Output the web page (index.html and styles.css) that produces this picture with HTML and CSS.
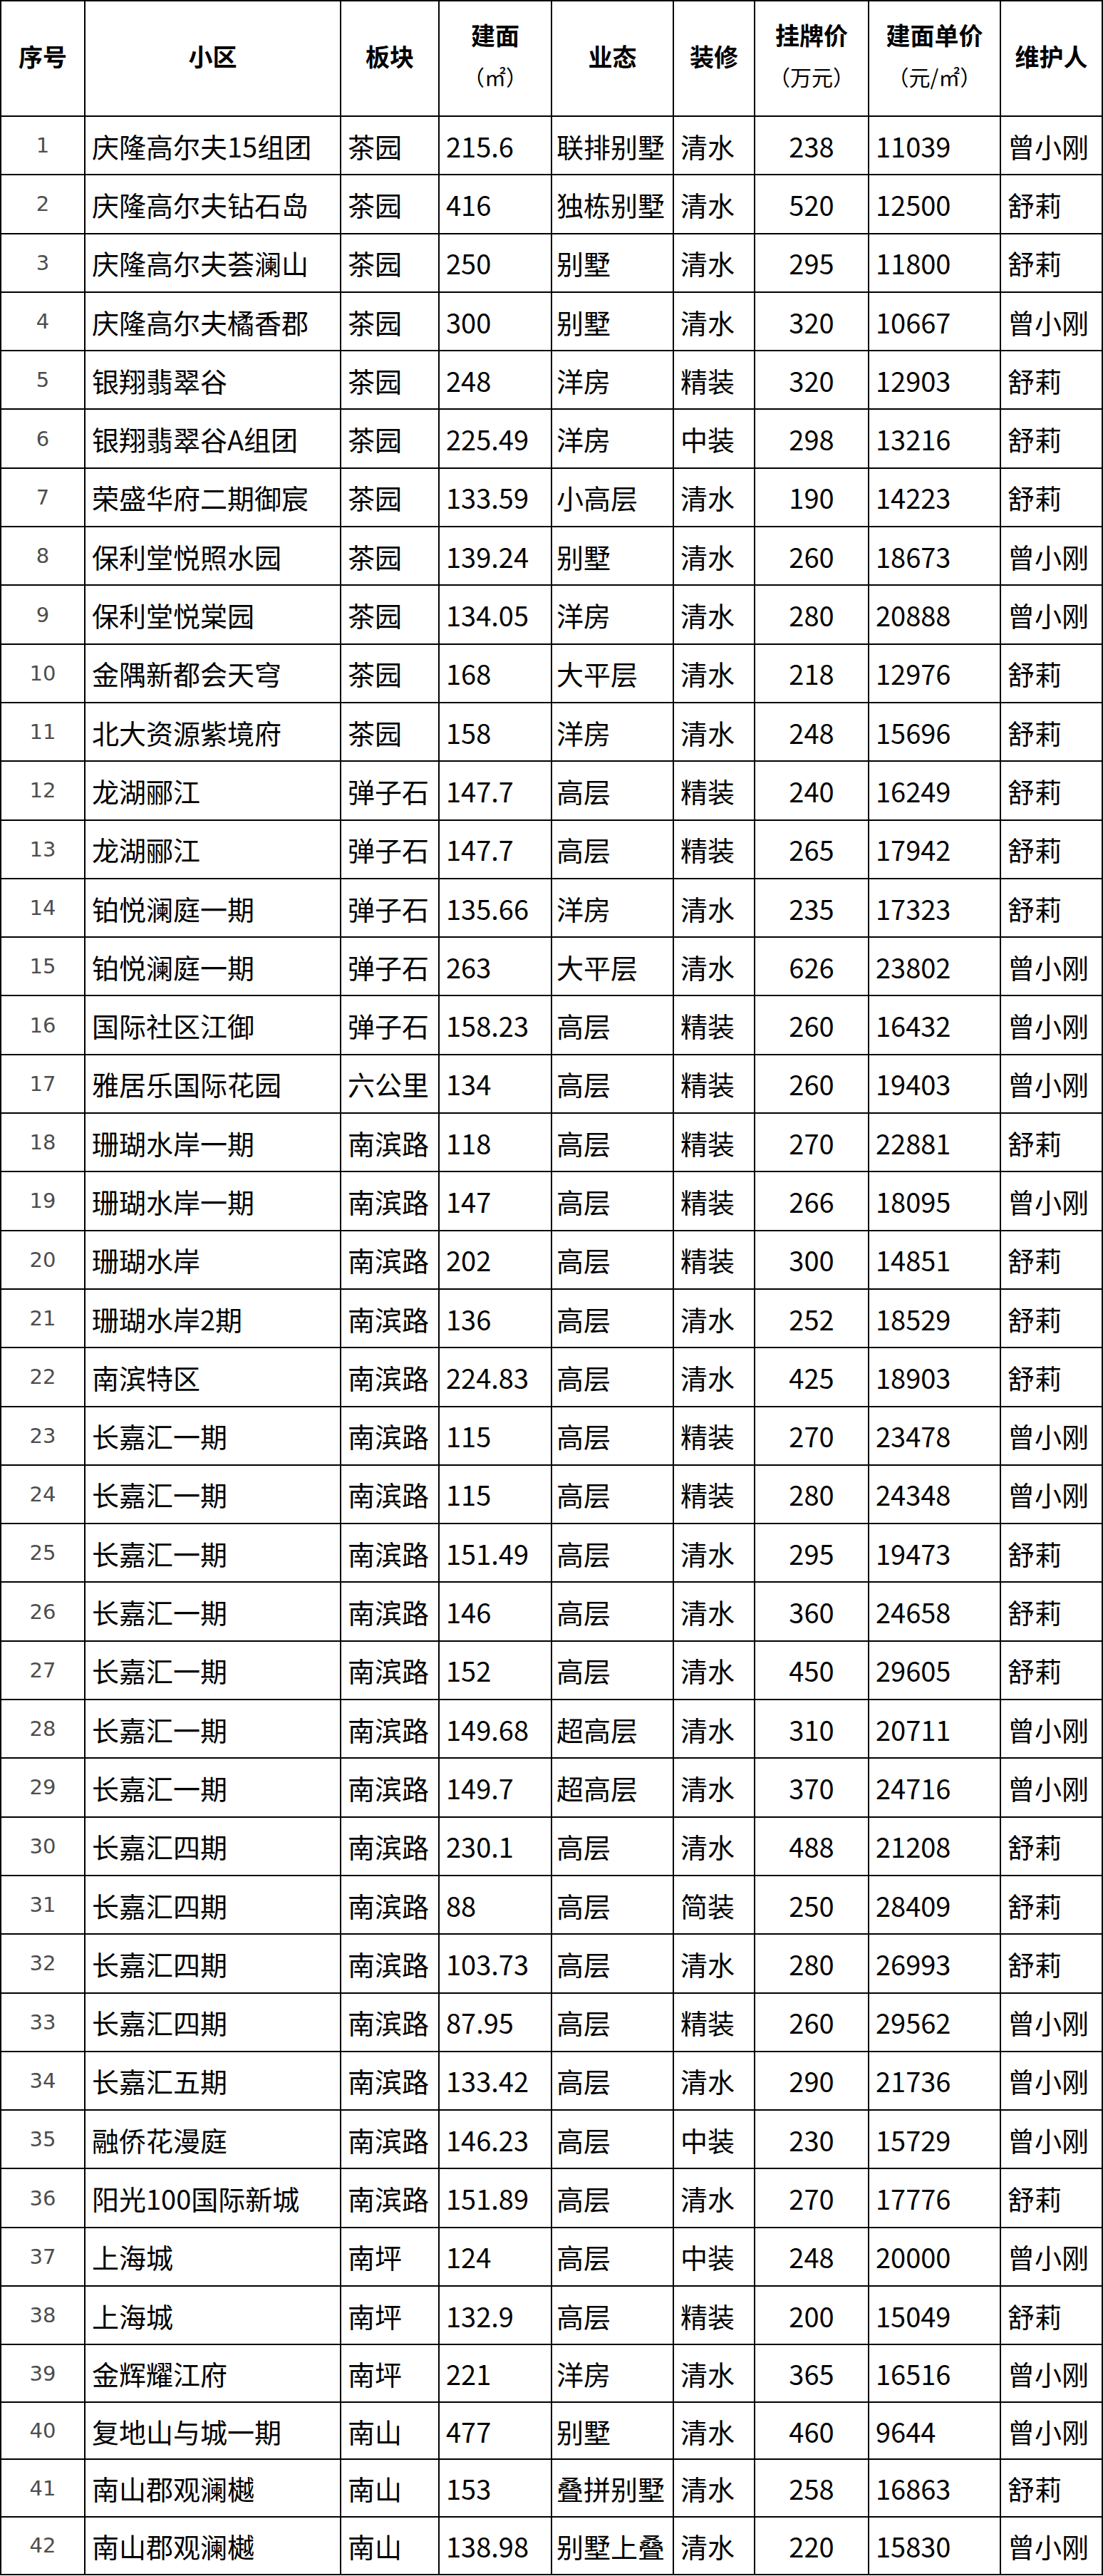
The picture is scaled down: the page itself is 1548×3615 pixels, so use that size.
FILE: index.html
```html
<!DOCTYPE html>
<html lang="zh-CN">
<head>
<meta charset="utf-8">
<title>房源表</title>
<link rel="stylesheet" href="styles.css">
</head>
<body>
<div class="sheet">
<div class="row head">
<div class="h"><span class="l">序号</span></div>
<div class="h"><span class="l">小区</span></div>
<div class="h"><span class="l">板块</span></div>
<div class="h"><span class="l">建面</span><span class="u">（㎡）</span></div>
<div class="h"><span class="l">业态</span></div>
<div class="h"><span class="l">装修</span></div>
<div class="h"><span class="l">挂牌价</span><span class="u">（万元）</span></div>
<div class="h"><span class="l">建面单价</span><span class="u">（元/㎡）</span></div>
<div class="h"><span class="l">维护人</span></div>
</div>
<div class="row"><div class="c num">1</div><div class="c">庆隆高尔夫15组团</div><div class="c">茶园</div><div class="c">215.6</div><div class="c yt">联排别墅</div><div class="c">清水</div><div class="c ctr">238</div><div class="c">11039</div><div class="c">曾小刚</div></div>
<div class="row"><div class="c num">2</div><div class="c">庆隆高尔夫钻石岛</div><div class="c">茶园</div><div class="c">416</div><div class="c yt">独栋别墅</div><div class="c">清水</div><div class="c ctr">520</div><div class="c">12500</div><div class="c">舒莉</div></div>
<div class="row"><div class="c num">3</div><div class="c">庆隆高尔夫荟澜山</div><div class="c">茶园</div><div class="c">250</div><div class="c yt">别墅</div><div class="c">清水</div><div class="c ctr">295</div><div class="c">11800</div><div class="c">舒莉</div></div>
<div class="row"><div class="c num">4</div><div class="c">庆隆高尔夫橘香郡</div><div class="c">茶园</div><div class="c">300</div><div class="c yt">别墅</div><div class="c">清水</div><div class="c ctr">320</div><div class="c">10667</div><div class="c">曾小刚</div></div>
<div class="row"><div class="c num">5</div><div class="c">银翔翡翠谷</div><div class="c">茶园</div><div class="c">248</div><div class="c yt">洋房</div><div class="c">精装</div><div class="c ctr">320</div><div class="c">12903</div><div class="c">舒莉</div></div>
<div class="row"><div class="c num">6</div><div class="c">银翔翡翠谷A组团</div><div class="c">茶园</div><div class="c">225.49</div><div class="c yt">洋房</div><div class="c">中装</div><div class="c ctr">298</div><div class="c">13216</div><div class="c">舒莉</div></div>
<div class="row"><div class="c num">7</div><div class="c">荣盛华府二期御宸</div><div class="c">茶园</div><div class="c">133.59</div><div class="c yt">小高层</div><div class="c">清水</div><div class="c ctr">190</div><div class="c">14223</div><div class="c">舒莉</div></div>
<div class="row"><div class="c num">8</div><div class="c">保利堂悦照水园</div><div class="c">茶园</div><div class="c">139.24</div><div class="c yt">别墅</div><div class="c">清水</div><div class="c ctr">260</div><div class="c">18673</div><div class="c">曾小刚</div></div>
<div class="row"><div class="c num">9</div><div class="c">保利堂悦棠园</div><div class="c">茶园</div><div class="c">134.05</div><div class="c yt">洋房</div><div class="c">清水</div><div class="c ctr">280</div><div class="c">20888</div><div class="c">曾小刚</div></div>
<div class="row"><div class="c num">10</div><div class="c">金隅新都会天穹</div><div class="c">茶园</div><div class="c">168</div><div class="c yt">大平层</div><div class="c">清水</div><div class="c ctr">218</div><div class="c">12976</div><div class="c">舒莉</div></div>
<div class="row"><div class="c num">11</div><div class="c">北大资源紫境府</div><div class="c">茶园</div><div class="c">158</div><div class="c yt">洋房</div><div class="c">清水</div><div class="c ctr">248</div><div class="c">15696</div><div class="c">舒莉</div></div>
<div class="row"><div class="c num">12</div><div class="c">龙湖郦江</div><div class="c">弹子石</div><div class="c">147.7</div><div class="c yt">高层</div><div class="c">精装</div><div class="c ctr">240</div><div class="c">16249</div><div class="c">舒莉</div></div>
<div class="row"><div class="c num">13</div><div class="c">龙湖郦江</div><div class="c">弹子石</div><div class="c">147.7</div><div class="c yt">高层</div><div class="c">精装</div><div class="c ctr">265</div><div class="c">17942</div><div class="c">舒莉</div></div>
<div class="row"><div class="c num">14</div><div class="c">铂悦澜庭一期</div><div class="c">弹子石</div><div class="c">135.66</div><div class="c yt">洋房</div><div class="c">清水</div><div class="c ctr">235</div><div class="c">17323</div><div class="c">舒莉</div></div>
<div class="row"><div class="c num">15</div><div class="c">铂悦澜庭一期</div><div class="c">弹子石</div><div class="c">263</div><div class="c yt">大平层</div><div class="c">清水</div><div class="c ctr">626</div><div class="c">23802</div><div class="c">曾小刚</div></div>
<div class="row"><div class="c num">16</div><div class="c">国际社区江御</div><div class="c">弹子石</div><div class="c">158.23</div><div class="c yt">高层</div><div class="c">精装</div><div class="c ctr">260</div><div class="c">16432</div><div class="c">曾小刚</div></div>
<div class="row"><div class="c num">17</div><div class="c">雅居乐国际花园</div><div class="c">六公里</div><div class="c">134</div><div class="c yt">高层</div><div class="c">精装</div><div class="c ctr">260</div><div class="c">19403</div><div class="c">曾小刚</div></div>
<div class="row"><div class="c num">18</div><div class="c">珊瑚水岸一期</div><div class="c">南滨路</div><div class="c">118</div><div class="c yt">高层</div><div class="c">精装</div><div class="c ctr">270</div><div class="c">22881</div><div class="c">舒莉</div></div>
<div class="row"><div class="c num">19</div><div class="c">珊瑚水岸一期</div><div class="c">南滨路</div><div class="c">147</div><div class="c yt">高层</div><div class="c">精装</div><div class="c ctr">266</div><div class="c">18095</div><div class="c">曾小刚</div></div>
<div class="row"><div class="c num">20</div><div class="c">珊瑚水岸</div><div class="c">南滨路</div><div class="c">202</div><div class="c yt">高层</div><div class="c">精装</div><div class="c ctr">300</div><div class="c">14851</div><div class="c">舒莉</div></div>
<div class="row"><div class="c num">21</div><div class="c">珊瑚水岸2期</div><div class="c">南滨路</div><div class="c">136</div><div class="c yt">高层</div><div class="c">清水</div><div class="c ctr">252</div><div class="c">18529</div><div class="c">舒莉</div></div>
<div class="row"><div class="c num">22</div><div class="c">南滨特区</div><div class="c">南滨路</div><div class="c">224.83</div><div class="c yt">高层</div><div class="c">清水</div><div class="c ctr">425</div><div class="c">18903</div><div class="c">舒莉</div></div>
<div class="row"><div class="c num">23</div><div class="c">长嘉汇一期</div><div class="c">南滨路</div><div class="c">115</div><div class="c yt">高层</div><div class="c">精装</div><div class="c ctr">270</div><div class="c">23478</div><div class="c">曾小刚</div></div>
<div class="row"><div class="c num">24</div><div class="c">长嘉汇一期</div><div class="c">南滨路</div><div class="c">115</div><div class="c yt">高层</div><div class="c">精装</div><div class="c ctr">280</div><div class="c">24348</div><div class="c">曾小刚</div></div>
<div class="row"><div class="c num">25</div><div class="c">长嘉汇一期</div><div class="c">南滨路</div><div class="c">151.49</div><div class="c yt">高层</div><div class="c">清水</div><div class="c ctr">295</div><div class="c">19473</div><div class="c">舒莉</div></div>
<div class="row"><div class="c num">26</div><div class="c">长嘉汇一期</div><div class="c">南滨路</div><div class="c">146</div><div class="c yt">高层</div><div class="c">清水</div><div class="c ctr">360</div><div class="c">24658</div><div class="c">舒莉</div></div>
<div class="row"><div class="c num">27</div><div class="c">长嘉汇一期</div><div class="c">南滨路</div><div class="c">152</div><div class="c yt">高层</div><div class="c">清水</div><div class="c ctr">450</div><div class="c">29605</div><div class="c">舒莉</div></div>
<div class="row"><div class="c num">28</div><div class="c">长嘉汇一期</div><div class="c">南滨路</div><div class="c">149.68</div><div class="c yt">超高层</div><div class="c">清水</div><div class="c ctr">310</div><div class="c">20711</div><div class="c">曾小刚</div></div>
<div class="row"><div class="c num">29</div><div class="c">长嘉汇一期</div><div class="c">南滨路</div><div class="c">149.7</div><div class="c yt">超高层</div><div class="c">清水</div><div class="c ctr">370</div><div class="c">24716</div><div class="c">曾小刚</div></div>
<div class="row"><div class="c num">30</div><div class="c">长嘉汇四期</div><div class="c">南滨路</div><div class="c">230.1</div><div class="c yt">高层</div><div class="c">清水</div><div class="c ctr">488</div><div class="c">21208</div><div class="c">舒莉</div></div>
<div class="row"><div class="c num">31</div><div class="c">长嘉汇四期</div><div class="c">南滨路</div><div class="c">88</div><div class="c yt">高层</div><div class="c">简装</div><div class="c ctr">250</div><div class="c">28409</div><div class="c">舒莉</div></div>
<div class="row"><div class="c num">32</div><div class="c">长嘉汇四期</div><div class="c">南滨路</div><div class="c">103.73</div><div class="c yt">高层</div><div class="c">清水</div><div class="c ctr">280</div><div class="c">26993</div><div class="c">舒莉</div></div>
<div class="row"><div class="c num">33</div><div class="c">长嘉汇四期</div><div class="c">南滨路</div><div class="c">87.95</div><div class="c yt">高层</div><div class="c">精装</div><div class="c ctr">260</div><div class="c">29562</div><div class="c">曾小刚</div></div>
<div class="row"><div class="c num">34</div><div class="c">长嘉汇五期</div><div class="c">南滨路</div><div class="c">133.42</div><div class="c yt">高层</div><div class="c">清水</div><div class="c ctr">290</div><div class="c">21736</div><div class="c">曾小刚</div></div>
<div class="row"><div class="c num">35</div><div class="c">融侨花漫庭</div><div class="c">南滨路</div><div class="c">146.23</div><div class="c yt">高层</div><div class="c">中装</div><div class="c ctr">230</div><div class="c">15729</div><div class="c">曾小刚</div></div>
<div class="row"><div class="c num">36</div><div class="c">阳光100国际新城</div><div class="c">南滨路</div><div class="c">151.89</div><div class="c yt">高层</div><div class="c">清水</div><div class="c ctr">270</div><div class="c">17776</div><div class="c">舒莉</div></div>
<div class="row"><div class="c num">37</div><div class="c">上海城</div><div class="c">南坪</div><div class="c">124</div><div class="c yt">高层</div><div class="c">中装</div><div class="c ctr">248</div><div class="c">20000</div><div class="c">曾小刚</div></div>
<div class="row"><div class="c num">38</div><div class="c">上海城</div><div class="c">南坪</div><div class="c">132.9</div><div class="c yt">高层</div><div class="c">精装</div><div class="c ctr">200</div><div class="c">15049</div><div class="c">舒莉</div></div>
<div class="row"><div class="c num">39</div><div class="c">金辉耀江府</div><div class="c">南坪</div><div class="c">221</div><div class="c yt">洋房</div><div class="c">清水</div><div class="c ctr">365</div><div class="c">16516</div><div class="c">曾小刚</div></div>
<div class="row"><div class="c num">40</div><div class="c">复地山与城一期</div><div class="c">南山</div><div class="c">477</div><div class="c yt">别墅</div><div class="c">清水</div><div class="c ctr">460</div><div class="c">9644</div><div class="c">曾小刚</div></div>
<div class="row"><div class="c num">41</div><div class="c">南山郡观澜樾</div><div class="c">南山</div><div class="c">153</div><div class="c yt">叠拼别墅</div><div class="c">清水</div><div class="c ctr">258</div><div class="c">16863</div><div class="c">舒莉</div></div>
<div class="row"><div class="c num">42</div><div class="c">南山郡观澜樾</div><div class="c">南山</div><div class="c">138.98</div><div class="c yt">别墅上叠</div><div class="c">清水</div><div class="c ctr">220</div><div class="c">15830</div><div class="c">曾小刚</div></div>
</div>
</body>
</html>
```

FILE: styles.css
```css
html, body {
  margin: 0;
  padding: 0;
  background: #fff;
}

.sheet {
  width: 1548px;
  box-sizing: border-box;
  display: grid;
  grid-template-columns: 116px 357px 136px 156px 169px 112px 158px 183px 141px;
  grid-template-rows: 160px repeat(38, 80.3px) repeat(4, 78.6px);
  gap: 2px;
  padding: 2px;
  background: #000;
  font-family: "Noto Sans CJK SC", "Noto Sans", sans-serif;
}

.row {
  display: contents;
}

.h {
  background: #fff;
  display: flex;
  flex-direction: column;
  justify-content: center;
  align-items: center;
  padding-bottom: 8px;
  box-sizing: border-box;
  font-size: 34px;
  font-weight: 700;
  color: #000;
  white-space: nowrap;
}

.h .l {
  line-height: 59px;
}

.h .u {
  font-size: 30px;
  font-weight: 400;
  line-height: 59px;
  text-spacing-trim: space-all;
}

.c {
  background: #fff;
  display: flex;
  align-items: center;
  padding-left: 9px;
  box-sizing: border-box;
  font-size: 38px;
  color: #000;
  white-space: nowrap;
  overflow: hidden;
}

.c.yt {
  padding-left: 6px;
}

.c.num {
  justify-content: center;
  padding-left: 0;
  font-family: "DejaVu Sans", sans-serif;
  font-size: 29px;
  color: #4d4d4d;
}

.c.ctr {
  justify-content: center;
  padding-left: 0;
}
```
